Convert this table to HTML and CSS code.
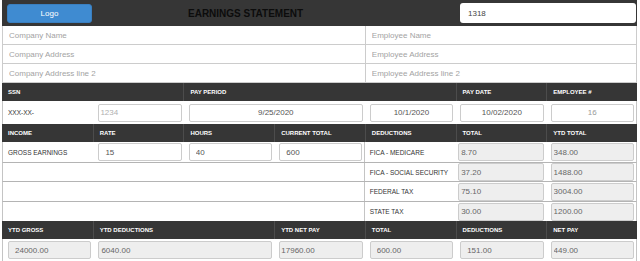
FILE: index.html
```html
<!DOCTYPE html>
<html>
<head>
<meta charset="utf-8">
<title>Earnings Statement</title>
<link rel="stylesheet" href="styles.css">
</head>
<body>
<div class="sheet">
  <div class="top">
    <button class="logo">Logo</button>
    <div class="title">EARNINGS STATEMENT</div>
    <input class="stub-no" value="1318">
  </div>

  <div class="info">
    <input class="info-field wide" placeholder="Company Name">
    <input class="info-field narrow" placeholder="Employee Name">
    <input class="info-field wide" placeholder="Company Address">
    <input class="info-field narrow" placeholder="Employee Address">
    <input class="info-field wide" placeholder="Company Address line 2">
    <input class="info-field narrow" placeholder="Employee Address line 2">
  </div>

  <div class="bar">
    <div class="th span2">SSN</div>
    <div class="th span3">PAY PERIOD</div>
    <div class="th">PAY DATE</div>
    <div class="th">EMPLOYEE #</div>
  </div>
  <div class="data h23">
    <div class="td lbl">XXX-XX-</div>
    <div class="td"><input class="box p1 faint" placeholder="1234"></div>
    <div class="td span2"><input class="box center" value="9/25/2020"></div>
    <div class="td"><input class="box center" value="10/1/2020"></div>
    <div class="td"><input class="box center" value="10/02/2020"></div>
    <div class="td"><input class="box center" placeholder="16"></div>
  </div>

  <div class="bar">
    <div class="th">INCOME</div>
    <div class="th">RATE</div>
    <div class="th">HOURS</div>
    <div class="th">CURRENT TOTAL</div>
    <div class="th">DEDUCTIONS</div>
    <div class="th">TOTAL</div>
    <div class="th">YTD TOTAL</div>
  </div>
  <div class="data h21 lined">
    <div class="td lbl">GROSS EARNINGS</div>
    <div class="td"><input class="box" value="15"></div>
    <div class="td"><input class="box" value="40"></div>
    <div class="td sep"><input class="box" value="600"></div>
    <div class="td lbl">FICA - MEDICARE</div>
    <div class="td"><input class="box ro p2 edge" value="8.70" readonly></div>
    <div class="td"><input class="box ro p2" value="348.00" readonly></div>
  </div>
  <div class="data h19 lined">
    <div class="td span4 sep"></div>
    <div class="td lbl">FICA - SOCIAL SECURITY</div>
    <div class="td"><input class="box ro p2 edge" value="37.20" readonly></div>
    <div class="td"><input class="box ro p2" value="1488.00" readonly></div>
  </div>
  <div class="data h20 lined">
    <div class="td span4 sep"></div>
    <div class="td lbl">FEDERAL TAX</div>
    <div class="td"><input class="box ro p2 edge" value="75.10" readonly></div>
    <div class="td"><input class="box ro p2" value="3004.00" readonly></div>
  </div>
  <div class="data h19">
    <div class="td span4 sep"></div>
    <div class="td lbl">STATE TAX</div>
    <div class="td"><input class="box ro p2 edge" value="30.00" readonly></div>
    <div class="td"><input class="box ro p2" value="1200.00" readonly></div>
  </div>

  <div class="bar">
    <div class="th">YTD GROSS</div>
    <div class="th span2">YTD DEDUCTIONS</div>
    <div class="th">YTD NET PAY</div>
    <div class="th">TOTAL</div>
    <div class="th">DEDUCTIONS</div>
    <div class="th">NET PAY</div>
  </div>
  <div class="data h22">
    <div class="td"><input class="box ro" value="24000.00" readonly></div>
    <div class="td span2"><input class="box ro p2" value="6040.00" readonly></div>
    <div class="td"><input class="box ro p1" value="17960.00" readonly></div>
    <div class="td"><input class="box ro" value="600.00" readonly></div>
    <div class="td"><input class="box ro" value="151.00" readonly></div>
    <div class="td"><input class="box ro p2" value="449.00" readonly></div>
  </div>
</div>
</body>
</html>
```

FILE: styles.css
```css
* {
  box-sizing: border-box;
  margin: 0;
  padding: 0;
}

body {
  background: #ffffff;
  font-family: "Liberation Sans", Arial, sans-serif;
}

.sheet {
  width: 635px;
  margin: 0 0 0 2px;
}

/* top header */
.top {
  display: flex;
  align-items: center;
  height: 26px;
  background: #363636;
}

.logo {
  width: 85px;
  height: 19px;
  margin-left: 5px;
  background: #3f8bd1;
  color: #ffffff;
  border: 1px solid #3a7fc0;
  border-radius: 3px;
  font-family: "Liberation Sans", Arial, sans-serif;
  font-size: 8px;
}

.title {
  margin-left: 96px;
  color: #0c0c0c;
  font-weight: bold;
  font-size: 10px;
}

.stub-no {
  margin-left: auto;
  margin-right: 1px;
  width: 176px;
  height: 20px;
  border: none;
  border-radius: 3px;
  background: #ffffff;
  padding-left: 8px;
  font-family: "Liberation Sans", Arial, sans-serif;
  font-size: 8px;
  color: #444;
}

/* company / employee info */
.info {
  display: grid;
  grid-template-columns: repeat(7, 1fr);
}

.info-field {
  height: 19px;
  border: none;
  border-bottom: 1px solid #cccccc;
  border-left: 1px solid #cccccc;
  padding-left: 6px;
  font-family: "Liberation Sans", Arial, sans-serif;
  font-size: 8px;
  color: #555;
  background: #fff;
  outline: none;
}

.info-field.wide {
  grid-column: span 4;
}

.info-field.narrow {
  grid-column: span 3;
  border-right: 1px solid #cccccc;
}

.info-field::placeholder {
  color: #a3a3a3;
}

/* dark heading bars */
.bar {
  display: grid;
  grid-template-columns: repeat(7, 1fr);
  height: 18px;
  background: #363636;
}

.th {
  display: flex;
  align-items: center;
  padding-left: 6px;
  color: #ffffff;
  font-weight: bold;
  font-size: 6px;
  border-left: 1px solid #4c4c4c;
}

.th:first-child {
  border-left: none;
}

/* data rows */
.data {
  display: grid;
  grid-template-columns: repeat(7, 1fr);
  border-left: 1px solid #c4c4c4;
  border-right: 1px solid #c4c4c4;
  background: #ffffff;
}

.data.lined {
  border-bottom: 1px solid #b4b4b4;
}

.h19 { height: 19px; }
.h20 { height: 20px; }
.h21 { height: 21px; }
.h22 { height: 22px; }
.h23 { height: 23px; }

.td {
  display: flex;
  align-items: center;
  min-width: 0;
}

.span2 { grid-column: span 2; }
.span3 { grid-column: span 3; }
.span4 { grid-column: span 4; }

.sep {
  border-right: 1px solid #c4c4c4;
}

.lbl {
  padding-left: 5px;
  font-size: 6.5px;
  color: #333333;
  white-space: nowrap;
}

.box {
  flex: 1;
  min-width: 0;
  height: 18px;
  margin: 0 2px 0 5px;
  border: 1px solid #cccccc;
  border-radius: 2px;
  padding: 0 6px;
  background: #ffffff;
  font-family: "Liberation Sans", Arial, sans-serif;
  font-size: 8px;
  color: #555555;
  outline: none;
}

.box::placeholder {
  color: #9a9a9a;
}

.box.faint::placeholder {
  color: #b0b0b0;
}

.box.center {
  text-align: center;
}

.box.ro {
  background: #eeeeee;
  color: #666666;
}

.box.p1 { padding-left: 1px; }
.box.p2 { padding-left: 2px; }

.box.edge {
  margin-left: 3px;
}
```
